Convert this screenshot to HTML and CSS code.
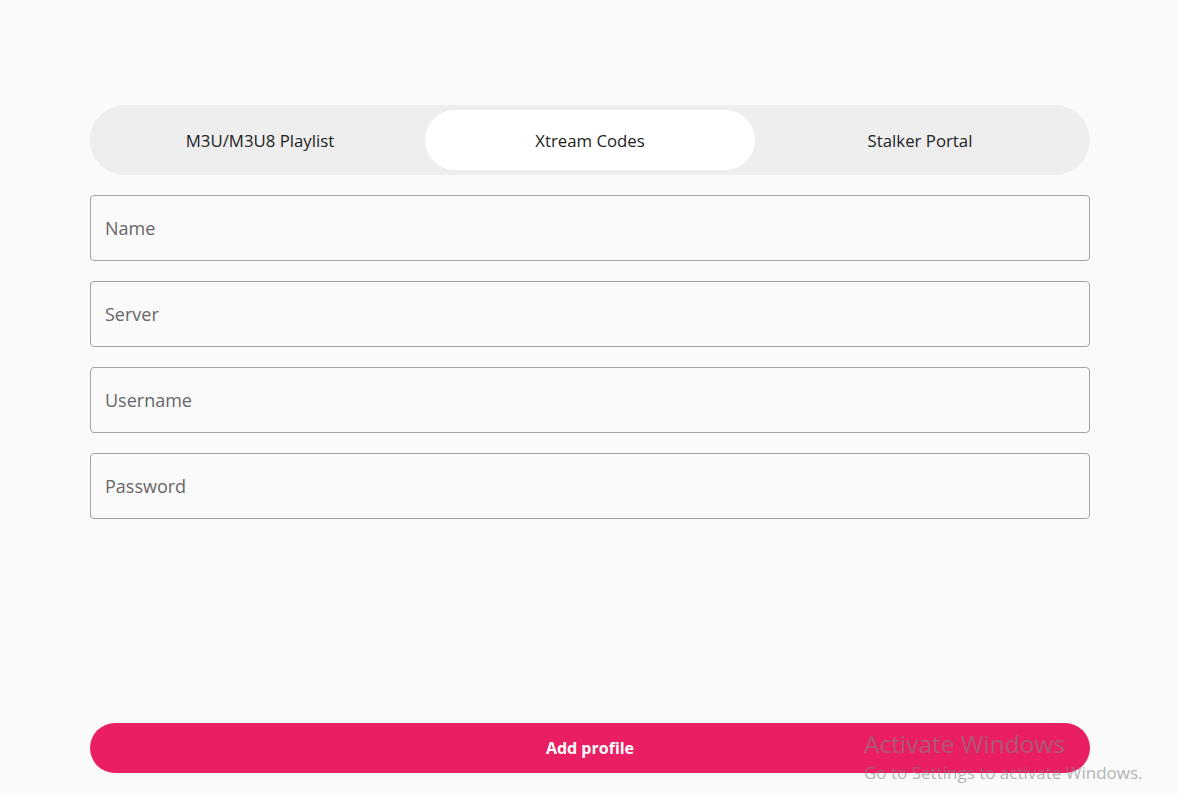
FILE: index.html
```html
<!DOCTYPE html>
<html>
<head>
<meta charset="utf-8">
<link rel="stylesheet" href="styles.css">
</head>
<body>
<div class="page">
  <div class="tabs">
    <div class="tab">M3U/M3U8 Playlist</div>
    <div class="tab active">Xtream Codes</div>
    <div class="tab">Stalker Portal</div>
  </div>
  <div class="fields">
    <div class="field">Name</div>
    <div class="field">Server</div>
    <div class="field">Username</div>
    <div class="field">Password</div>
  </div>
  <button class="submit">Add profile</button>
</div>
<div class="watermark">
  <div class="wm-title">Activate Windows</div>
  <div class="wm-sub">Go to Settings to activate Windows.</div>
</div>
</body>
</html>
```

FILE: styles.css
```css
html, body {
  margin: 0;
  padding: 0;
  background: #fafafa;
  font-family: "Open Sans", "Noto Sans", sans-serif;
}
.page {
  box-sizing: border-box;
  height: 793px;
  padding: 105px 88px 20px 90px;
  display: flex;
  flex-direction: column;
}
.tabs {
  height: 70px;
  box-sizing: border-box;
  background: #eeeeee;
  border-radius: 35px;
  padding: 5px;
  display: grid;
  grid-template-columns: repeat(3, 1fr);
}
.tab {
  display: flex;
  align-items: center;
  justify-content: center;
  font-size: 16.8px;
  color: #222;
  border-radius: 30px;
}
.tab.active {
  background: #ffffff;
}
.fields {
  margin-top: 20px;
  display: flex;
  flex-direction: column;
  gap: 20px;
}
.field {
  height: 66px;
  box-sizing: border-box;
  border: 1px solid #a3a3a3;
  border-radius: 4px;
  padding-left: 14px;
  display: flex;
  align-items: center;
  font-size: 18px;
  color: #666;
}
.submit {
  margin-top: auto;
  height: 50px;
  border: none;
  border-radius: 25px;
  background: #e91e63;
  color: #fff;
  font-family: "Open Sans", "Noto Sans", sans-serif;
  font-weight: 700;
  font-size: 16px;
}
.watermark {
  position: absolute;
  left: 864px;
  top: 728px;
  color: rgba(130, 130, 130, 0.6);
  font-family: "Open Sans", "Noto Sans", sans-serif;
}
.wm-title {
  font-size: 24.5px;
  line-height: 32px;
}
.wm-sub {
  font-size: 17px;
  line-height: 26px;
}
```
